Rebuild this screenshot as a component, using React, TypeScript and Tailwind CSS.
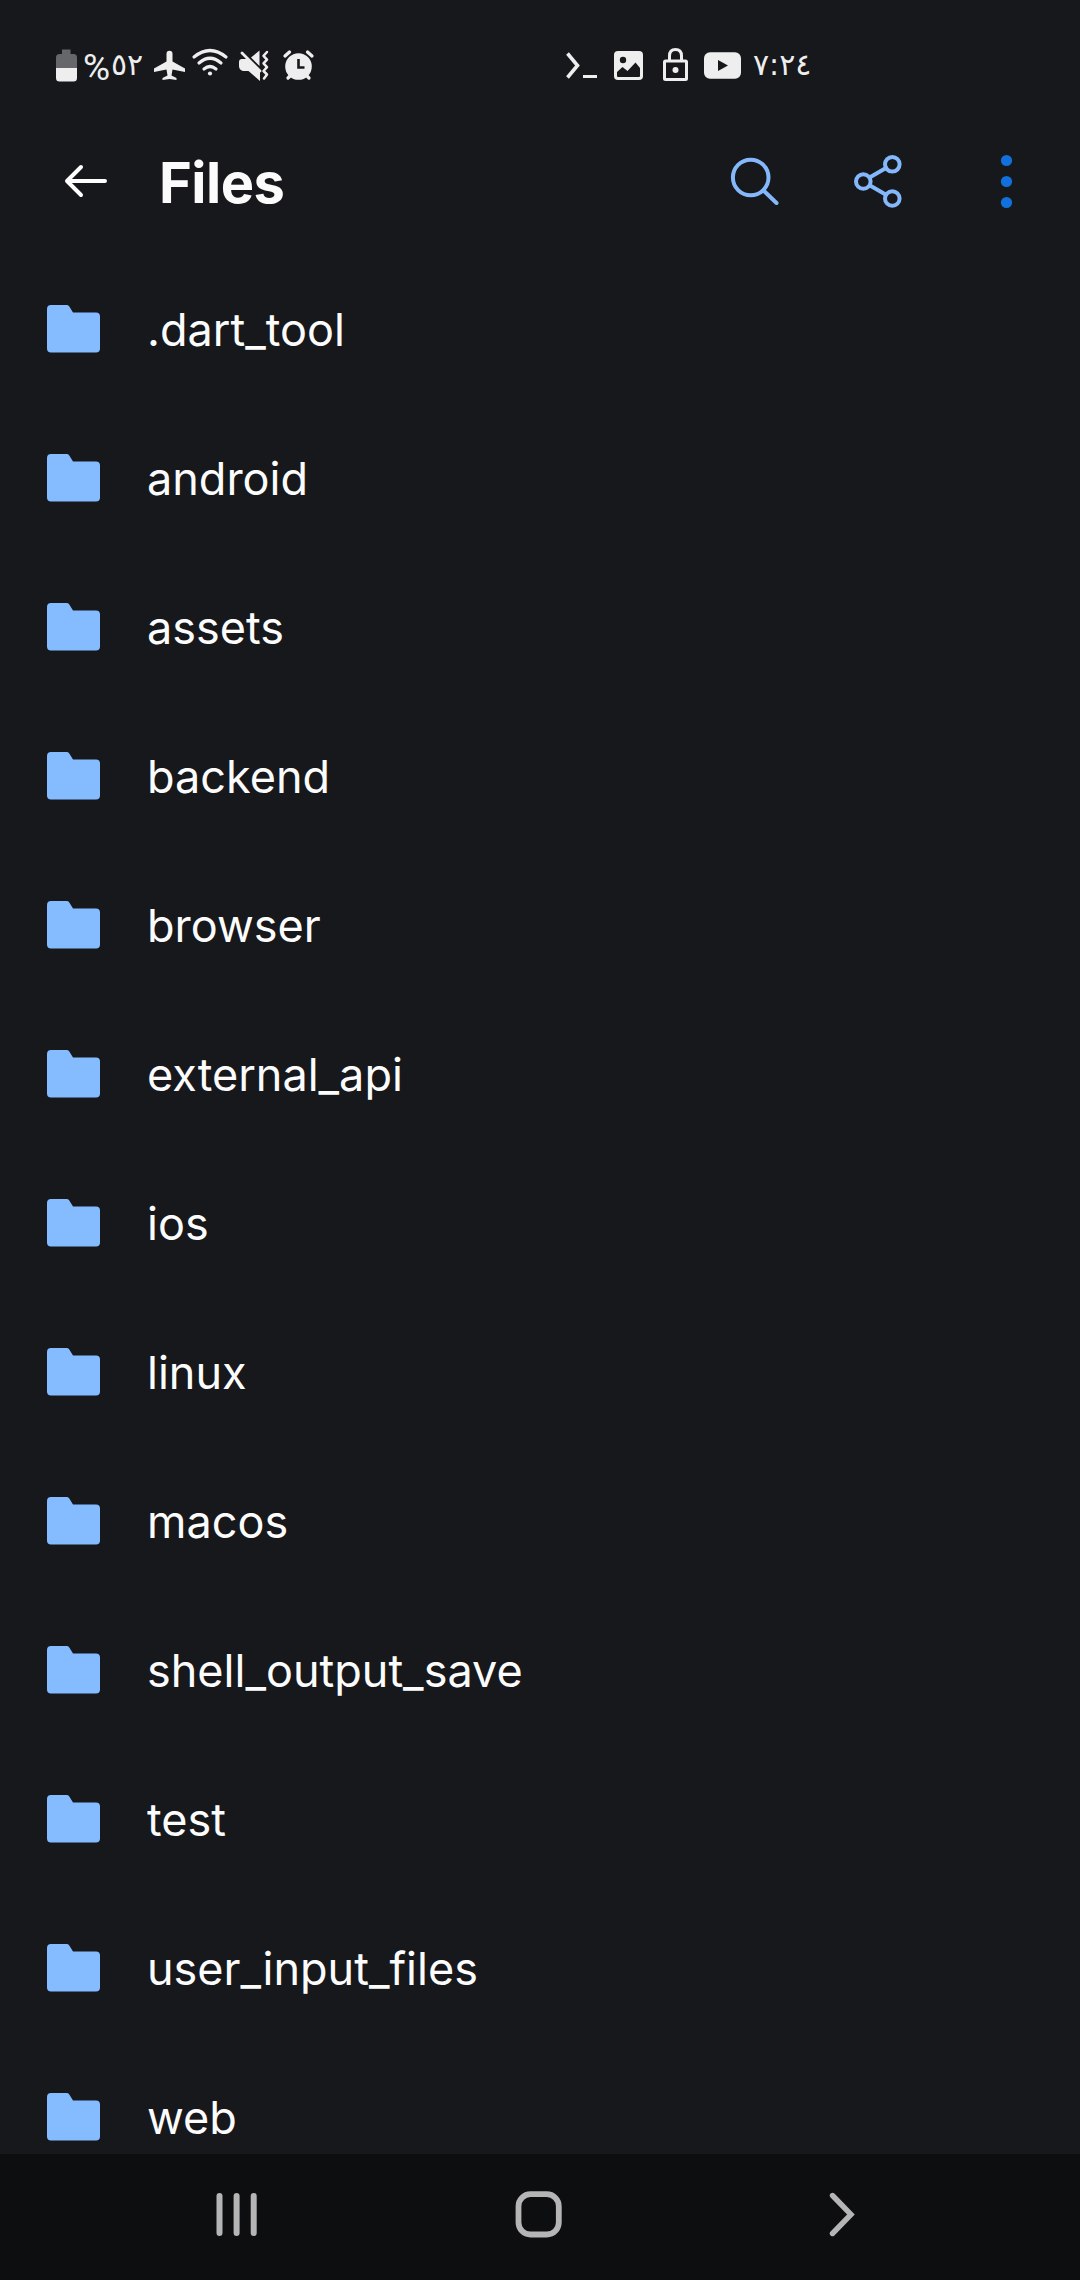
const folders = [
  '.dart_tool', 'android', 'assets', 'backend', 'browser', 'external_api', 'ios',
  'linux', 'macos', 'shell_output_save', 'test', 'user_input_files', 'web',
];

function StatusBar() {
  return (
    <div className="flex h-[130px] shrink-0 items-start pt-[30px] text-[#eeeeee]">
      <svg className="ml-[40px] h-[70px] w-[41px]" viewBox="0 0 41 70">
        <path fill="#66676a" d="M22 19.5h8.500V24h3a3.500 3.500 0 0 1 3.500 3.500V38H16V27.500A3.500 3.500 0 0 1 19.500 24H22z" />
        <path fill="#eee" d="M16 38h21v10a3.500 3.500 0 0 1-3.500 3.500h-14A3.500 3.500 0 0 1 16 48z" />
      </svg>
      <div dir="ltr" className="ml-[2px] flex w-[66px] items-start whitespace-nowrap">
        <span className="mt-[18px] w-[28px] font-['Roboto',sans-serif] text-[37px] leading-[40px] font-normal">%</span>
        <span className="mt-[15px] font-['DejaVu_Sans',sans-serif] text-[30px] leading-[40px] [unicode-bidi:bidi-override]">٥٢</span>
      </div>
      <svg className="h-[70px] w-[181px]" viewBox="149 0 181 70" fill="none">
        <path fill="#eee" d="M166.500 24q0-3.300 3-3.300t3 3.300v7.500l12.500 7v3.500l-12.500-2.500-1 6 5 2.500v2l-7-1-7 1v-2l5-2.500-1-6-12.500 2.500v-3.500l12.500-7z" />
        <g stroke="#eee" strokeWidth="3.200" strokeLinecap="round">
          <path d="M194 27q16-13 32 0M199 33q11-9.500 22 0M204 39q6-5 12 0" />
        </g>
        <circle cx="210" cy="43.500" r="2.100" fill="#eee" />
        <path fill="#eee" d="M242 29h5.500l12.500 12v10L248.500 41H243q-4-1-4-5v-4q0-3 3-3M251 27.500l8.500-7V36z" />
        <path d="m242 23 18 18" stroke="#eee" strokeWidth="2.800" strokeLinecap="round" />
        <path d="m267 22-3.500 3.800 3.500 3.800-3.500 3.800 3.500 3.800-3.500 3.800 3.500 3.500-3 4" stroke="#eee" strokeWidth="2.500" strokeLinecap="round" strokeLinejoin="round" />
        <circle cx="298.500" cy="36.500" r="13.300" fill="#eee" />
        <path d="m285 26 4.500-4M312 26l-4.500-4M288 48l4-4M309 48l-4-4" stroke="#eee" strokeWidth="3.300" strokeLinecap="round" />
        <path d="M298.500 29v8.500h6" stroke="#17181c" strokeWidth="2.600" />
      </svg>
      <svg className="ml-[220px] h-[70px] w-[198px]" viewBox="550 0 198 70" fill="none">
        <path d="m567.500 23.500 10 12-10 12" stroke="#eee" strokeWidth="3.600" />
        <path d="M583 46.500h14" stroke="#eee" strokeWidth="3" />
        <rect x="614" y="21" width="29" height="29" rx="4" fill="#eee" />
        <circle cx="623" cy="30" r="3.200" fill="#17181c" />
        <path fill="#17181c" d="m617 42 5.500-5 5 4 8-8.500L640 38v8q0 1-1 1h-21q-1 0-1-1z" />
        <rect x="664.500" y="31" width="22" height="18.500" rx="1" stroke="#eee" strokeWidth="3" />
        <path d="M669.500 30v-4q0-6.500 6-6.500t6 6.500v4" stroke="#eee" strokeWidth="3" />
        <circle cx="675.500" cy="40" r="3" fill="#eee" />
        <rect x="704" y="22.300" width="37" height="26.500" rx="6" fill="#eee" />
        <path fill="#17181c" d="m718 30 10 5.500-10 5.500z" />
      </svg>
      <span className="mt-[15px] ml-[5px] w-[64px] whitespace-nowrap font-['DejaVu_Sans',sans-serif] text-[30px] leading-[40px] [direction:ltr] [unicode-bidi:bidi-override]">٧:٢٤</span>
    </div>
  );
}

function AppBar() {
  return (
    <header className="flex h-[108px] shrink-0 items-start">
      <svg className="ml-[60px] h-[100px] w-[52px]" viewBox="60 0 52 100" fill="none" stroke="#fff" strokeWidth="4" strokeLinecap="round" strokeLinejoin="round">
        <path d="M105 51H67M81 37 67 51l14 14" />
      </svg>
      <h1 className="ml-[47px] w-[541px] font-['Inter',sans-serif] text-[56px] leading-[106px] font-bold tracking-[-0.5px] text-[#fbfbfb]">Files</h1>
      <svg className="h-[100px] w-[360px]" viewBox="0 0 360 100" fill="none" stroke="#84b8fb" strokeWidth="4" strokeLinecap="round">
        <circle cx="50.700" cy="47.500" r="17.800" />
        <path d="m63.500 60.500 13 12.500" />
        <circle cx="163.300" cy="51.500" r="7.300" />
        <circle cx="192.300" cy="34.300" r="7.300" />
        <circle cx="192.300" cy="68.500" r="7.300" />
        <path d="m170 47.300 16-9.200M170 55.500l16 9.200" />
        <g fill="#1170dc" stroke="none">
          <circle cx="306.500" cy="30.500" r="5.600" />
          <circle cx="306.500" cy="51.500" r="5.600" />
          <circle cx="306.500" cy="72.500" r="5.600" />
        </g>
      </svg>
    </header>
  );
}

function FolderRow({ name }: { name: string }) {
  return (
    <li className="flex h-[149px] shrink-0 items-start pl-[47px]">
      <svg className="mt-[67px] h-[48px] w-[53px]" viewBox="0 0 53 48">
        <path fill="#85bbff" d="M4 0h15.500q1.800 0 2.800 1.400L26 7.500h23q4 0 4 4V43.500q0 4-4 4H4q-4 0-4-4V4q0-4 4-4" />
      </svg>
      <span className="mt-[62px] ml-[47px] font-['Inter',sans-serif] text-[45px] leading-[60px] text-[#fcfcfc]">{name}</span>
    </li>
  );
}

function NavigationBar() {
  return (
    <nav className="flex h-[126px] shrink-0 items-start bg-[#0d0e10] pt-[26px]">
      <svg className="ml-[200px] h-[70px] w-[80px]" viewBox="0 0 80 70" fill="none" stroke="#b5b5b5" strokeWidth="6" strokeLinecap="round">
        <path d="M19.500 16v37M36.600 16v37M53.700 16v37" />
      </svg>
      <svg className="ml-[220px] h-[70px] w-[80px]" viewBox="0 0 80 70" fill="none" stroke="#b5b5b5" strokeWidth="5.800">
        <rect x="18.500" y="14.200" width="40.300" height="40.300" rx="12" />
      </svg>
      <svg className="ml-[230px] h-[70px] w-[80px]" viewBox="0 0 80 70" fill="none" stroke="#b5b5b5" strokeWidth="5.400" strokeLinecap="round">
        <path d="m22.500 15.500 18.500 19-18.500 19" />
      </svg>
    </nav>
  );
}

export default function App() {
  return (
    <div className="flex h-[2280px] w-[1080px] flex-col overflow-hidden bg-[#17181c]">
      <StatusBar />
      <AppBar />
      <ul className="flex min-h-0 flex-1 flex-col overflow-hidden">
        {folders.map((name) => <FolderRow key={name} name={name} />)}
      </ul>
      <NavigationBar />
    </div>
  );
}
